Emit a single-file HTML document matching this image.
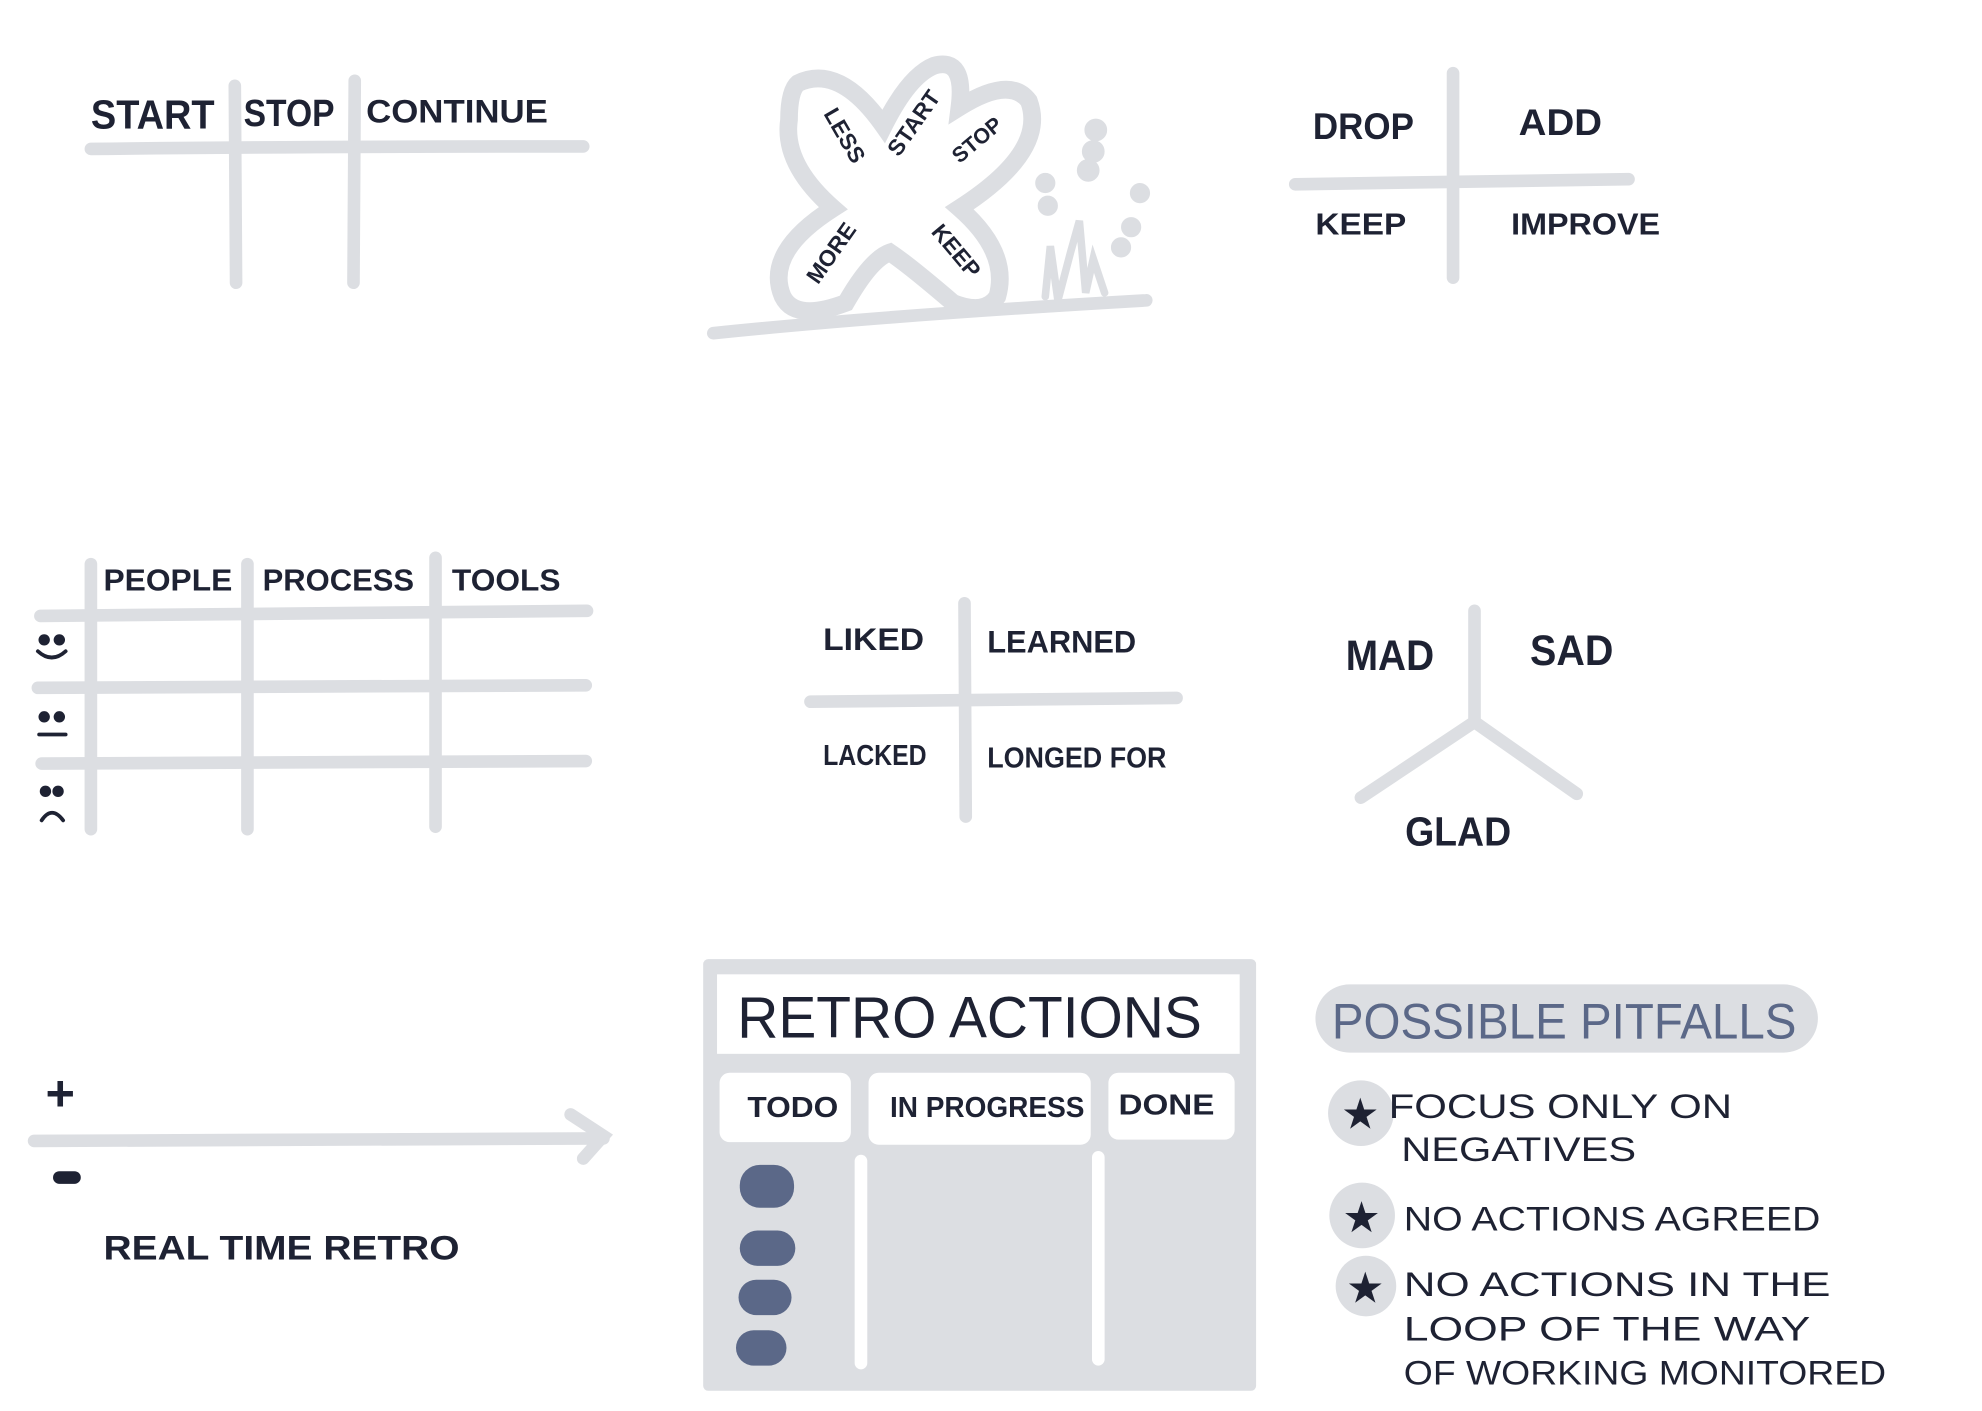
<!DOCTYPE html>
<html><head><meta charset="utf-8"><style>
html,body{margin:0;padding:0;background:#fff;width:1982px;height:1411px;overflow:hidden}
svg{display:block}
text{font-family:"Liberation Sans",sans-serif;font-weight:bold;fill:#1e2233}
.n{font-weight:normal}
</style></head><body>
<svg width="1982" height="1411" viewBox="0 0 1570 1118" preserveAspectRatio="none">
<g stroke="#dcdee2" stroke-width="10" stroke-linecap="round" fill="none">
<path d="M72 118 Q250 116 462 116"/><path d="M186 68 L187 224"/><path d="M281 64 L280 224"/>
<path stroke-width="14" d="M632 66 Q665 50 700 100 Q720 60 740 52 Q765 45 760 85 Q800 60 815 80 Q830 120 760 165 Q800 200 790 235 Q780 250 755 240 Q720 210 705 200 Q690 205 670 240 Q630 255 620 235 Q605 200 660 165 Q620 130 625 95 Q625 72 632 66Z"/>
<path d="M565 264 Q700 250 908 238"/>
<path stroke-width="6" d="M828 235 L832 195 L838 238 L848 200 L855 175 L860 232 L866 205 L875 232"/>
<circle cx="868" cy="103" r="4" fill="#dcdee2"/><circle cx="866" cy="120" r="4" fill="#dcdee2"/><circle cx="862" cy="135" r="4" fill="#dcdee2"/><circle cx="828" cy="145" r="3" fill="#dcdee2"/><circle cx="830" cy="163" r="3" fill="#dcdee2"/><circle cx="903" cy="153" r="3" fill="#dcdee2"/><circle cx="896" cy="180" r="3" fill="#dcdee2"/><circle cx="888" cy="196" r="3" fill="#dcdee2"/>
<path d="M1026 146 L1290 142"/><path d="M1151 58 L1151 220"/>
<path d="M72 447 L72 657"/><path d="M196 447 L196 657"/><path d="M345 442 L345 655"/>
<path d="M32 488 L465 484"/><path d="M30 545 L464 543"/><path d="M33 605 L464 603"/>
<path d="M642 556 L932 553"/><path d="M764 478 L765 647"/>
<path d="M1168 484 L1168 570"/><path d="M1168 572 L1078 632"/><path d="M1168 572 L1249 629"/>
<path d="M27 904 L478 902"/><path d="M452 883 L478 900 L462 918"/>
</g>
<text x="72" y="102" font-size="32" textLength="98" lengthAdjust="spacingAndGlyphs">START</text>
<text x="193" y="100" font-size="30" textLength="72" lengthAdjust="spacingAndGlyphs">STOP</text>
<text x="290" y="97" font-size="26" textLength="144" lengthAdjust="spacingAndGlyphs">CONTINUE</text>
<text font-size="18" transform="translate(652 90) rotate(60)">LESS</text>
<text font-size="18" transform="translate(712 125) rotate(-55)">START</text>
<text font-size="17" transform="translate(760 130) rotate(-40)">STOP</text>
<text font-size="18" transform="translate(648 226) rotate(-55)">MORE</text>
<text font-size="18" transform="translate(737 184) rotate(50)">KEEP</text>
<text x="1040" y="110" font-size="29" textLength="80" lengthAdjust="spacingAndGlyphs">DROP</text>
<text x="1203" y="107" font-size="29" textLength="66" lengthAdjust="spacingAndGlyphs">ADD</text>
<text x="1042" y="186" font-size="24" textLength="72" lengthAdjust="spacingAndGlyphs">KEEP</text>
<text x="1197" y="186" font-size="24" textLength="118" lengthAdjust="spacingAndGlyphs">IMPROVE</text>
<text x="82" y="468" font-size="24" textLength="102" lengthAdjust="spacingAndGlyphs">PEOPLE</text>
<text x="208" y="468" font-size="24" textLength="120" lengthAdjust="spacingAndGlyphs">PROCESS</text>
<text x="358" y="468" font-size="24" textLength="86" lengthAdjust="spacingAndGlyphs">TOOLS</text>
<g fill="#1e2233" stroke="#1e2233" stroke-width="3" stroke-linecap="round">
<circle cx="35" cy="507" r="3"/><circle cx="47" cy="507" r="3"/><path d="M30 516 Q41 526 52 516" fill="none"/>
<circle cx="35" cy="568" r="3"/><circle cx="47" cy="568" r="3"/><path d="M31 582 L52 582"/>
<circle cx="36" cy="627" r="3"/><circle cx="46" cy="627" r="3"/><path d="M33 650 Q41 638 50 650" fill="none"/>
</g>
<text x="652" y="515" font-size="25" textLength="80" lengthAdjust="spacingAndGlyphs">LIKED</text>
<text x="782" y="517" font-size="25" textLength="118" lengthAdjust="spacingAndGlyphs">LEARNED</text>
<text x="652" y="606" font-size="23" textLength="82" lengthAdjust="spacingAndGlyphs">LACKED</text>
<text x="782" y="608" font-size="23" textLength="142" lengthAdjust="spacingAndGlyphs">LONGED FOR</text>
<text x="1066" y="531" font-size="34" textLength="70" lengthAdjust="spacingAndGlyphs">MAD</text>
<text x="1212" y="527" font-size="34" textLength="66" lengthAdjust="spacingAndGlyphs">SAD</text>
<text x="1113" y="670" font-size="32" textLength="84" lengthAdjust="spacingAndGlyphs">GLAD</text>
<text x="36" y="880" font-size="40">+</text>
<rect x="42" y="928" width="22" height="10" rx="5" fill="#1e2233"/>
<text x="82" y="998" font-size="27" textLength="282" lengthAdjust="spacingAndGlyphs">REAL TIME RETRO</text>
<rect x="557" y="760" width="438" height="342" rx="4" fill="#dcdee2"/>
<rect x="568" y="772" width="414" height="63" fill="#fff"/>
<text class="n" x="584" y="822" font-size="46" textLength="368" lengthAdjust="spacingAndGlyphs">RETRO ACTIONS</text>
<rect x="570" y="850" width="104" height="55" rx="8" fill="#fff"/>
<rect x="688" y="850" width="176" height="57" rx="8" fill="#fff"/>
<rect x="878" y="850" width="100" height="53" rx="8" fill="#fff"/>
<text x="592" y="885" font-size="23" textLength="72" lengthAdjust="spacingAndGlyphs">TODO</text>
<text x="705" y="885" font-size="23" textLength="154" lengthAdjust="spacingAndGlyphs">IN PROGRESS</text>
<text x="886" y="883" font-size="23" textLength="76" lengthAdjust="spacingAndGlyphs">DONE</text>
<g stroke="#fff" stroke-width="10" stroke-linecap="round"><path d="M682 920 L682 1080"/><path d="M870 917 L870 1077"/></g>
<g fill="#5b6888"><rect x="586" y="923" width="43" height="34" rx="16"/><rect x="586" y="975" width="44" height="28" rx="14"/><rect x="585" y="1014" width="42" height="28" rx="14"/><rect x="583" y="1054" width="40" height="28" rx="14"/></g>
<rect x="1042" y="780" width="398" height="54" rx="27" fill="#dcdee2"/>
<text class="n" x="1055" y="823" font-size="40" textLength="368" lengthAdjust="spacingAndGlyphs" style="fill:#5b6888">POSSIBLE PITFALLS</text>
<g fill="#dcdee2"><circle cx="1078" cy="882" r="26"/><circle cx="1079" cy="963" r="26"/><circle cx="1082" cy="1019" r="24"/></g>
<g font-size="30"><text x="1064" y="893">★</text><text x="1065" y="975">★</text><text x="1068" y="1031">★</text></g>
<g font-size="27" class="n">
<text class="n" x="1100" y="886" textLength="272" lengthAdjust="spacingAndGlyphs">FOCUS ONLY ON</text>
<text class="n" x="1110" y="920" textLength="186" lengthAdjust="spacingAndGlyphs">NEGATIVES</text>
<text class="n" x="1112" y="975" textLength="330" lengthAdjust="spacingAndGlyphs">NO ACTIONS AGREED</text>
<text class="n" x="1112" y="1027" textLength="338" lengthAdjust="spacingAndGlyphs">NO ACTIONS IN THE</text>
<text class="n" x="1112" y="1062" textLength="322" lengthAdjust="spacingAndGlyphs">LOOP OF THE WAY</text>
<text class="n" x="1112" y="1097" textLength="382" lengthAdjust="spacingAndGlyphs">OF WORKING MONITORED</text>
</g>
</svg>
</body></html>
